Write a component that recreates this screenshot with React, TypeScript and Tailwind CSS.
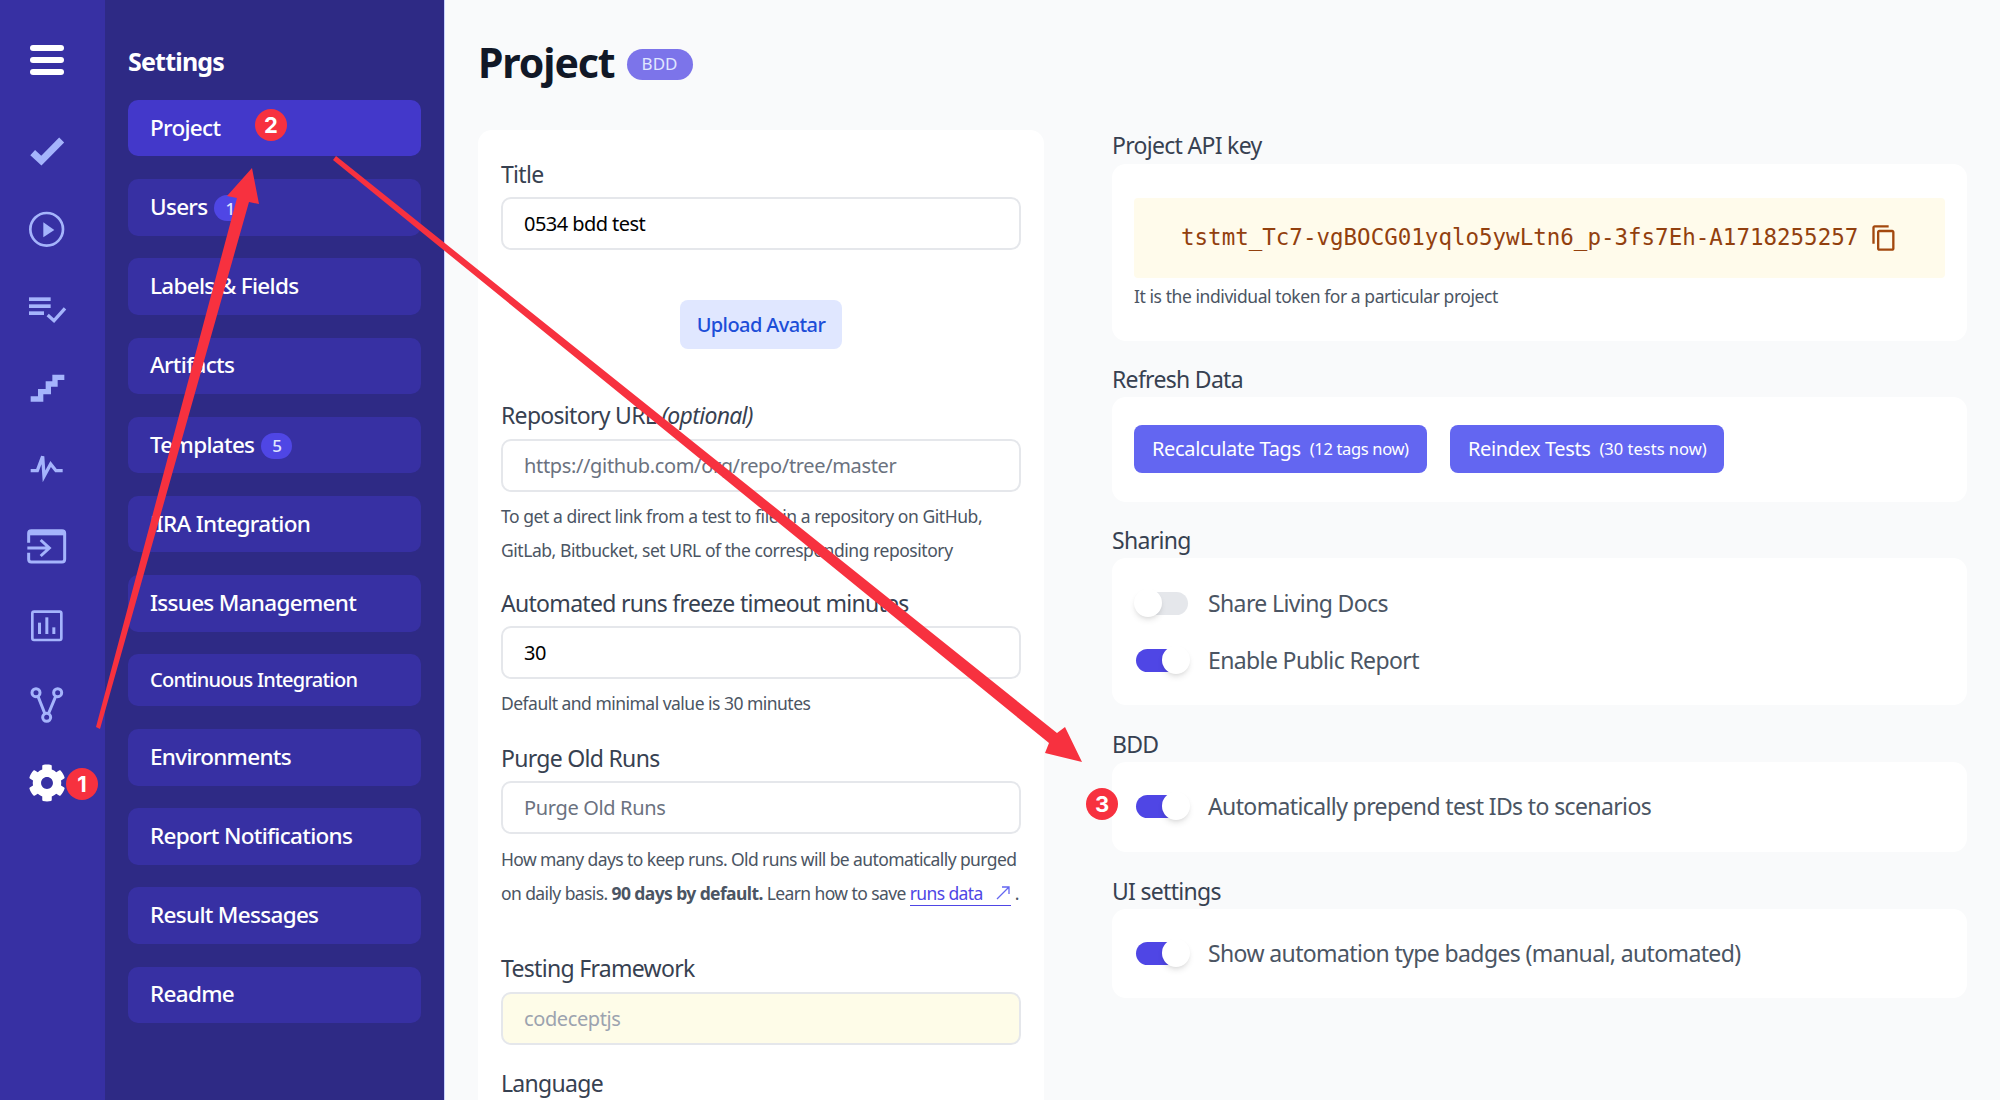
import React from 'react';
import { FaCog } from 'react-icons/fa';
import { MdContentCopy } from 'react-icons/md';

const C = '#a5b4fc';

function Ico({ y, children }: { y: number; children: React.ReactNode }) {
  return (
    <svg width={60} height={60} viewBox={`-9 ${y} 180 180`} className="block">
      {children}
    </svg>
  );
}

function Rail() {
  return (
    <div className="w-[105px] shrink-0 bg-[#3730a3] pt-[30px] pl-[17px] flex flex-col">
      <div className="w-[60px] h-[60px] flex flex-col items-center justify-center gap-[6px]">
        <div className="w-[34px] h-[6px] rounded-full bg-white" />
        <div className="w-[34px] h-[6px] rounded-full bg-white" />
        <div className="w-[34px] h-[6px] rounded-full bg-white" />
      </div>
      <div className="mt-[31px] flex flex-col gap-[19px]">
        <Ico y={-27}>
          <path d="M38 68 L64 92 L125 30" fill="none" stroke={C} strokeWidth={21} />
        </Ico>
        <Ico y={210}>
          <circle cx={80} cy={298} r={49} fill="none" stroke={C} strokeWidth={8} />
          <polygon points="70,277 103,300 70,322" fill={C} />
        </Ico>
        <Ico y={450}>
          <rect x={27} y={505} width={65} height={11} fill={C} />
          <rect x={27} y={526} width={65} height={11} fill={C} />
          <rect x={27} y={547} width={45} height={11} fill={C} />
          <path d="M83 558 L102 575 L135 538" fill="none" stroke={C} strokeWidth={10} />
        </Ico>
        <Ico y={-33}>
          <path d="M32 90 H62 V68 H85 V45 H105 V25 H133" fill="none" stroke={C} strokeWidth={16} />
        </Ico>
        <Ico y={204}>
          <path d="M32 305 H52 L68 262 L72 322 L92 285 L108 305 H128" fill="none" stroke={C} strokeWidth={10} />
        </Ico>
        <Ico y={438}>
          <path d="M26 518 V490 Q26 482 34 482 H126 Q134 482 134 490 V568 Q134 576 126 576 H34 Q26 576 26 568 V548" fill="none" stroke={C} strokeWidth={9} />
          <rect x={26} y={482} width={108} height={14} fill={C} />
          <path d="M22 534 H85 M62 510 L88 534 L62 558" fill="none" stroke={C} strokeWidth={9} />
        </Ico>
        <Ico y={-15}>
          <rect x={37} y={35} width={87} height={85} rx={5} fill="none" stroke={C} strokeWidth={8} />
          <rect x={54} y={68} width={9} height={34} fill={C} />
          <rect x={76} y={52} width={9} height={50} fill={C} />
          <rect x={97} y={82} width={9} height={20} fill={C} />
        </Ico>
        <Ico y={222}>
          <circle cx={48} cy={278} r={12} fill="none" stroke={C} strokeWidth={9} />
          <circle cx={113} cy={278} r={12} fill="none" stroke={C} strokeWidth={9} />
          <circle cx={80} cy={352} r={12} fill="none" stroke={C} strokeWidth={9} />
          <path d="M54 289 L75 342 M107 289 L85 342" fill="none" stroke={C} strokeWidth={9} />
        </Ico>
        <div className="w-[60px] h-[60px] flex items-center justify-center">
          <FaCog size={38} color="#ffffff" />
        </div>
      </div>
    </div>
  );
}

const items: { t: string; n?: string; small?: boolean; active?: boolean }[] = [
  { t: 'Project', active: true },
  { t: 'Users', n: '1' },
  { t: 'Labels & Fields' },
  { t: 'Artifacts' },
  { t: 'Templates', n: '5' },
  { t: 'JIRA Integration' },
  { t: 'Issues Management' },
  { t: 'Continuous Integration', small: true },
  { t: 'Environments' },
  { t: 'Report Notifications' },
  { t: 'Result Messages' },
  { t: 'Readme' },
];

function Panel() {
  return (
    <div className="w-[340px] shrink-0 bg-[#2e2a85] border-r border-[#c7d2fe] pl-[23px] pr-[23px] pt-[44px]">
      <div className="h-[34px] leading-[34px] text-[25px] font-bold text-white tracking-[-0.8px]">Settings</div>
      <div className="mt-[22px] flex flex-col gap-[22.8px]">
        {items.map((i) => (
          <div
            key={i.t}
            className={
              (i.active ? 'bg-[#4338ca] ' : 'bg-[#3730a3] ') +
              (i.small ? 'h-[52px] text-[20px] tracking-[-0.75px] ' : 'h-[56.4px] text-[22.5px] tracking-[-0.7px] ') +
              'rounded-[10px] pl-[22px] pb-[1px] flex items-center text-white font-medium'
            }
          >
            <span>{i.t}</span>
            {i.n && (
              <span className="ml-[7px] w-[31px] h-[26px] rounded-full bg-[#4f46e5] text-[#e0e7ff] text-[17px] flex items-center justify-center mt-[3px]">
                {i.n}
              </span>
            )}
          </div>
        ))}
      </div>
    </div>
  );
}

function Label({ children, cls }: { children: React.ReactNode; cls: string }) {
  return <div className={'h-[30px] leading-[30px] text-[23px] text-[#374151] tracking-[-0.7px] whitespace-nowrap ' + cls}>{children}</div>;
}

function Field({ value, placeholder }: { value?: string; placeholder?: string }) {
  return (
    <input
      readOnly
      value={value}
      placeholder={placeholder}
      className={
        (value ? 'tracking-[-0.55px] ' : 'tracking-[-0.35px] ') +
        'block w-full h-[53px] rounded-[10px] border-2 border-[#e5e7eb] bg-white pl-[21px] text-[20px] text-black placeholder:text-[#6b7280] outline-none'
      }
    />
  );
}

function Hint({ children, cls }: { children: React.ReactNode; cls: string }) {
  return <div className={'leading-[34px] text-[17.5px] text-[#4b5563] whitespace-nowrap ' + cls}>{children}</div>;
}

function Left() {
  return (
    <div className="w-[566px] shrink-0 bg-white rounded-t-[14px] px-[23px] pt-[29px] pb-[40px] mt-[130px] h-[1000px]">
      <Label cls="mb-[8px]">Title</Label>
      <Field value="0534 bdd test" />
      <div className="mt-[50px] flex justify-center">
        <button className="w-[162px] h-[49px] rounded-[8px] bg-[#e0e7ff] text-[#1d4ed8] text-[20px] font-medium tracking-[-0.6px]">Upload Avatar</button>
      </div>
      <Label cls="mt-[51px] mb-[9px]">
        Repository URL <i>(optional)</i>
      </Label>
      <Field placeholder="https://github.com/org/repo/tree/master" />
      <Hint cls="mt-[7px] tracking-[-0.45px]">
        To get a direct link from a test to file in a repository on GitHub,
        <br />
        GitLab, Bitbucket, set URL of the corresponding repository
      </Hint>
      <Label cls="mt-[21px] mb-[8px]">Automated runs freeze timeout minutes</Label>
      <Field value="30" />
      <Hint cls="mt-[7px] tracking-[-0.52px]">Default and minimal value is 30 minutes</Hint>
      <Label cls="mt-[23px] mb-[8px]">Purge Old Runs</Label>
      <Field placeholder="Purge Old Runs" />
      <Hint cls="mt-[8px] tracking-[-0.6px]">
        How many days to keep runs. Old runs will be automatically purged
        <br />
        on daily basis. <b className="font-bold">90 days by default.</b> Learn how to save{' '}
        <span className="text-[#4f46e5] border-b border-[#4f46e5] inline-flex items-center gap-[12px] h-[24px]">
          runs data
          <svg width="16" height="16" viewBox="0 0 16 16" fill="none" stroke="#6366f1" strokeWidth="1.3">
            <path d="M2 14 L14 2 M7 2 H14 V9" />
          </svg>
        </span>{' '}
        .
      </Hint>
      <Label cls="mt-[43px] mb-[9px]">Testing Framework</Label>
      <input
        readOnly
        value="codeceptjs"
        className="block w-full h-[53px] rounded-[10px] border-2 border-[#e5e7eb] bg-[#fefce8] pl-[21px] text-[20px] text-[#9ca3af] outline-none tracking-[-0.4px]"
      />
      <Label cls="mt-[23px]">Language</Label>
    </div>
  );
}

function Toggle({ on }: { on?: boolean }) {
  return (
    <div className={(on ? 'bg-[#4f46e5] ' : 'bg-[#e5e7eb] ') + 'relative w-[52px] h-[23px] rounded-full shrink-0'}>
      <div
        className={
          (on ? 'right-[-2px] ' : 'left-[-2px] ') +
          'absolute top-[-2.5px] w-[28px] h-[28px] rounded-full bg-white shadow-md'
        }
      />
    </div>
  );
}

function Row({ on, children, cls }: { on?: boolean; children: React.ReactNode; cls: string }) {
  return (
    <div className={'flex items-center gap-[20px] pl-[24px] text-[23px] text-[#4b5563] tracking-[-0.62px] ' + cls}>
      <Toggle on={on} />
      <span>{children}</span>
    </div>
  );
}

function Right() {
  return (
    <div className="w-[855px] shrink-0 ml-[68px] pt-[130px]">
      <Label cls="mb-[4px]">Project API key</Label>
      <div className="h-[177px] bg-white rounded-[14px] px-[22px] pt-[34px]">
        <div className="h-[80px] bg-[#fffbeb] rounded-[4px] pl-[47px] flex items-center gap-[12px]">
          <span className="[font-family:'DejaVu_Sans_Mono',monospace] text-[22.5px] text-[#92400e] whitespace-nowrap">
            tstmt_Tc7-vgBOCG01yqlo5ywLtn6_p-3fs7Eh-A1718255257
          </span>
          <MdContentCopy size={28} color="#a3480e" />
        </div>
        <div className="mt-[3px] leading-[30px] text-[17.5px] text-[#4b5563] tracking-[-0.43px]">It is the individual token for a particular project</div>
      </div>
      <Label cls="mt-[23px] mb-[3px]">Refresh Data</Label>
      <div className="h-[105px] bg-white rounded-[14px] px-[22px] pt-[28px] flex gap-[23px]">
        <button className="h-[48px] w-[293px] pl-[18px] rounded-[8px] bg-[#6366f1] text-white text-[20px] flex items-center gap-[9px] tracking-[-0.35px]">
          Recalculate Tags <span className="text-[16.5px]">(12 tags now)</span>
        </button>
        <button className="h-[48px] w-[274px] pl-[18px] rounded-[8px] bg-[#6366f1] text-white text-[20px] flex items-center gap-[9px] tracking-[-0.4px]">
          Reindex Tests <span className="text-[16.5px] tracking-[0px]">(30 tests now)</span>
        </button>
      </div>
      <Label cls="mt-[23px] mb-[3px]">Sharing</Label>
      <div className="h-[147px] bg-white rounded-[14px] pt-[30px] flex flex-col gap-[27px]">
        <Row cls="h-[30px]">Share Living Docs</Row>
        <Row on cls="h-[30px]">Enable Public Report</Row>
      </div>
      <Label cls="mt-[24px] mb-[3px]">BDD</Label>
      <div className="h-[90px] bg-white rounded-[14px] pt-[29px]">
        <Row on cls="h-[30px]">Automatically prepend test IDs to scenarios</Row>
      </div>
      <Label cls="mt-[24px] mb-[3px]">UI settings</Label>
      <div className="h-[89px] bg-white rounded-[14px] pt-[29px]">
        <Row on cls="h-[30px]">Show automation type badges (manual, automated)</Row>
      </div>
    </div>
  );
}

function Num({ n, cls }: { n: string; cls: string }) {
  return (
    <div className={'absolute w-[32px] h-[32px] rounded-full bg-[#f7313f] text-white text-[22px] font-bold flex items-center justify-center [font-family:Inter,sans-serif] ' + cls}>
      {n}
    </div>
  );
}

export default function App() {
  return (
    <div className="relative w-[2000px] h-[1100px] overflow-hidden flex bg-[#f9fafb] [font-family:'Noto_Sans',sans-serif]">
      <Rail />
      <Panel />
      <div className="relative flex-1 pl-[33px] flex items-start">
        <div className="absolute left-[33px] top-[36px] flex items-center gap-[12px]">
          <h1 className="text-[41px] leading-[52px] font-bold text-[#111827] tracking-[-1.1px]">Project</h1>
          <span className="w-[66px] h-[31px] mt-[4px] rounded-full bg-[#7c74ea] text-[#e0e7ff] text-[17px] flex items-center justify-center">BDD</span>
        </div>
        <Left />
        <Right />
      </div>
      <svg className="absolute inset-0 pointer-events-none" width={2000} height={1100} viewBox="0 0 2000 1100">
        <polygon points="100,729 249,202 259,204 252,168 227,196 237,198 96,727" fill="#f7313f" />
        <polygon points="336,156 1057,733 1065,727 1082,762 1045,753 1049,743 333,160" fill="#f7313f" />
      </svg>
      <Num n="1" cls="left-[66px] top-[768px]" />
      <Num n="2" cls="left-[255px] top-[109px]" />
      <Num n="3" cls="left-[1086px] top-[788px]" />
    </div>
  );
}
